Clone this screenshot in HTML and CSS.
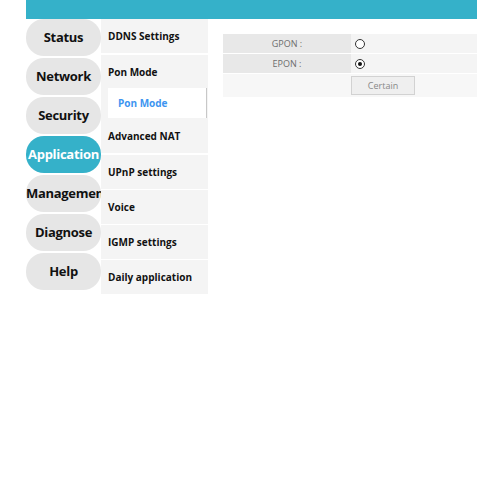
FILE: index.html
```html
<!DOCTYPE html>
<html>
<head>
<meta charset="utf-8">
<link rel="stylesheet" href="styles.css">
</head>
<body>
<div class="page">
  <div class="header"></div>
  <div class="main">
    <div class="nav">
      <div class="nav-item">Status</div>
      <div class="nav-item">Network</div>
      <div class="nav-item">Security</div>
      <div class="nav-item active">Application</div>
      <div class="nav-item">Management</div>
      <div class="nav-item">Diagnose</div>
      <div class="nav-item">Help</div>
    </div>
    <div class="sub">
      <div class="sub-item first">DDNS Settings</div>
      <div class="sub-item pon">Pon Mode</div>
      <div class="sub-child-wrap"><div class="sub-child">Pon Mode</div></div>
      <div class="sub-item nat">Advanced NAT</div>
      <div class="sub-item after-nat">UPnP settings</div>
      <div class="sub-item">Voice</div>
      <div class="sub-item">IGMP settings</div>
      <div class="sub-item">Daily application</div>
    </div>
    <div class="content">
      <div class="form">
        <div class="row">
          <div class="label">GPON :</div>
          <div class="value"><span class="radio"></span></div>
        </div>
        <div class="row">
          <div class="label">EPON :</div>
          <div class="value"><span class="radio checked"></span></div>
        </div>
        <div class="row actions">
          <div class="label blank"></div>
          <div class="value"><button class="btn">Certain</button></div>
        </div>
      </div>
    </div>
  </div>
</div>
</body>
</html>
```

FILE: styles.css
```css
html, body {
  margin: 0;
  padding: 0;
  background: #ffffff;
  font-family: "Open Sans", "Noto Sans", sans-serif;
}

.page {
  margin-left: 26px;
}

.header {
  height: 19px;
  background: #35b1c9;
}

.main {
  display: flex;
  align-items: flex-start;
}

.nav {
  width: 75px;
  display: flex;
  flex-direction: column;
  gap: 2px;
}

.nav-item {
  height: 37px;
  line-height: 36px;
  border-radius: 18px;
  background: #e6e6e6;
  color: #111;
  font-weight: 700;
  font-size: 13px;
  text-align: center;
  overflow: hidden;
  white-space: nowrap;
  letter-spacing: -0.3px;
}

.nav-item.active {
  background: #35b1c9;
  color: #ffffff;
}

.sub {
  width: 107px;
  display: flex;
  flex-direction: column;
}

.sub-item {
  height: 34px;
  background: #f4f4f4;
  margin-top: 1px;
  padding-left: 7px;
  display: flex;
  align-items: center;
  font-size: 10px;
  font-weight: 700;
  color: #111;
  white-space: nowrap;
}

.sub-item.first {
  margin-top: 0;
}

.sub-item.pon {
  margin-top: 2px;
  height: 33px;
}

.sub-item.nat {
  margin-top: 0;
  height: 35px;
  padding-top: 1px;
  box-sizing: border-box;
}

.sub-item.after-nat {
  margin-top: 2px;
}

.sub-child-wrap {
  background: #f4f4f4;
  padding-left: 7px;
  padding-right: 1px;
}

.sub-child {
  height: 30px;
  background: #ffffff;
  border-right: 1px solid #c8c8c8;
  padding-left: 10px;
  display: flex;
  align-items: center;
  font-size: 10px;
  font-weight: 700;
  color: #3d95f0;
}

.content {
  flex: 1;
  padding-left: 15px;
  padding-top: 15px;
}

.form {
  display: flex;
  flex-direction: column;
}

.row {
  display: flex;
  height: 19px;
  border-bottom: 1px solid #ffffff;
}

.row .label {
  width: 128px;
  background: #e8e8e8;
  color: #6d6d6d;
  font-size: 9px;
  display: flex;
  align-items: center;
  justify-content: center;
}

.row .value {
  flex: 1;
  background: #f4f4f4;
  display: flex;
  align-items: center;
  padding-left: 4px;
}

.row.actions {
  height: 23px;
  border-bottom: 0;
}

.row.actions .label,
.row.actions .value {
  background: #f7f7f7;
}

.row.actions .value {
  padding-left: 0;
}

.radio {
  width: 8px;
  height: 8px;
  border: 1px solid #333;
  border-radius: 50%;
  background: #fff;
  display: flex;
  align-items: center;
  justify-content: center;
}

.radio.checked::after {
  content: "";
  width: 4px;
  height: 4px;
  border-radius: 50%;
  background: #111;
}

.btn {
  width: 64px;
  height: 19px;
  margin: 0;
  padding: 0;
  border: 1px solid #d2d2d2;
  background: #efefef;
  color: #888;
  font-family: "Open Sans", "Noto Sans", sans-serif;
  font-size: 9px;
}
```
